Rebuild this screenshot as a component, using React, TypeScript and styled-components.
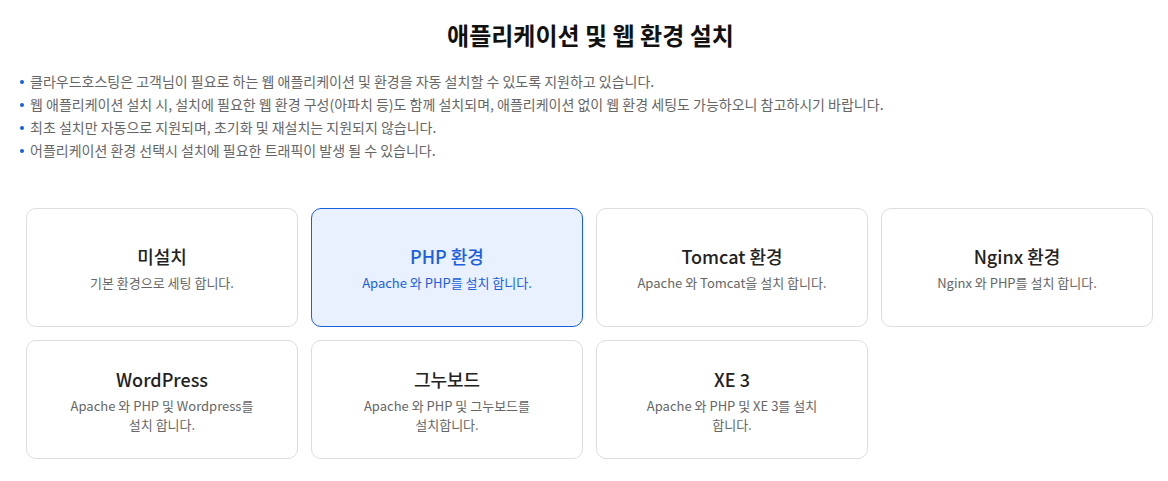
import React from "react";
import styled, { createGlobalStyle, css } from "styled-components";

const GlobalStyle = createGlobalStyle`
  body {
    margin: 0;
    background: #fff;
    font-family: "Noto Sans CJK KR", "Noto Sans", sans-serif;
  }
`;

const Page = styled.div`
  padding: 17px 15px 20px 20px;
`;

const Title = styled.h2`
  margin: 0;
  text-align: center;
  font-size: 24px;
  line-height: 36px;
  font-weight: 700;
  color: #111;
  padding-left: 8px;
`;

const Notes = styled.ul`
  list-style: none;
  margin: 17px 0 0;
  padding: 0;
`;

const Note = styled.li`
  display: flex;
  align-items: center;
  gap: 6px;
  font-size: 14px;
  line-height: 23px;
  color: #666;

  &::before {
    content: "";
    width: 4px;
    height: 4px;
    border-radius: 50%;
    background: #1a5fe0;
    flex: none;
  }
`;

const Grid = styled.div`
  display: grid;
  grid-template-columns: repeat(4, 1fr);
  gap: 13px;
  margin: 46px 0 0 6px;
`;

const Card = styled.div<{ $active?: boolean }>`
  height: 119px;
  box-sizing: border-box;
  border: 1px solid #ddd;
  border-radius: 10px;
  background: #fff;
  display: flex;
  flex-direction: column;
  align-items: center;
  justify-content: center;
  text-align: center;
  cursor: pointer;

  ${(p) =>
    p.$active &&
    css`
      border-color: #1a5fe0;
      background: #e9f1fe;
    `}
`;

const CardTitle = styled.div<{ $active?: boolean }>`
  font-size: 18px;
  line-height: 26px;
  font-weight: 500;
  color: ${(p) => (p.$active ? "#1a5fe0" : "#222")};
`;

const CardDesc = styled.div<{ $active?: boolean }>`
  margin-top: 4px;
  font-size: 13px;
  line-height: 19px;
  color: ${(p) => (p.$active ? "#1a5fe0" : "#666")};
`;

const notes = [
  "클라우드호스팅은 고객님이 필요로 하는 웹 애플리케이션 및 환경을 자동 설치할 수 있도록 지원하고 있습니다.",
  "웹 애플리케이션 설치 시, 설치에 필요한 웹 환경 구성(아파치 등)도 함께 설치되며, 애플리케이션 없이 웹 환경 세팅도 가능하오니 참고하시기 바랍니다.",
  "최초 설치만 자동으로 지원되며, 초기화 및 재설치는 지원되지 않습니다.",
  "어플리케이션 환경 선택시 설치에 필요한 트래픽이 발생 될 수 있습니다.",
];

const options = [
  { name: "미설치", desc: ["기본 환경으로 세팅 합니다."] },
  { name: "PHP 환경", desc: ["Apache 와 PHP를 설치 합니다."], active: true },
  { name: "Tomcat 환경", desc: ["Apache 와 Tomcat을 설치 합니다."] },
  { name: "Nginx 환경", desc: ["Nginx 와 PHP를 설치 합니다."] },
  { name: "WordPress", desc: ["Apache 와 PHP 및 Wordpress를", "설치 합니다."] },
  { name: "그누보드", desc: ["Apache 와 PHP 및 그누보드를", "설치합니다."] },
  { name: "XE 3", desc: ["Apache 와 PHP 및 XE 3를 설치", "합니다."] },
];

export default function App() {
  return (
    <>
      <GlobalStyle />
      <Page>
        <Title>애플리케이션 및 웹 환경 설치</Title>
        <Notes>
          {notes.map((n) => (
            <Note key={n}>{n}</Note>
          ))}
        </Notes>
        <Grid>
          {options.map((o) => (
            <Card key={o.name} $active={o.active}>
              <CardTitle $active={o.active}>{o.name}</CardTitle>
              <CardDesc $active={o.active}>
                {o.desc.map((line, i) => (
                  <div key={i}>{line}</div>
                ))}
              </CardDesc>
            </Card>
          ))}
        </Grid>
      </Page>
    </>
  );
}
